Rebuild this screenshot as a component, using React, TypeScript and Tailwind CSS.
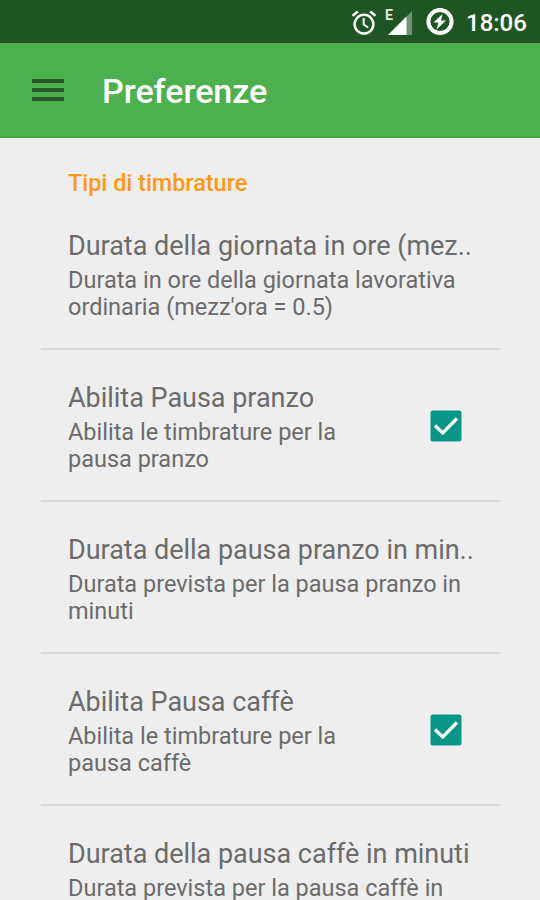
import clsx from 'clsx'

type Preference = {
  title: string
  // One entry per drawn line of the summary
  summary: string[]
  checked?: boolean
}

const preferences: Preference[] = [
  {
    title: 'Durata della giornata in ore (mez..',
    summary: ['Durata in ore della giornata lavorativa', "ordinaria (mezz'ora = 0.5)"],
  },
  {
    title: 'Abilita Pausa pranzo',
    summary: ['Abilita le timbrature per la', 'pausa pranzo'],
    checked: true,
  },
  {
    title: 'Durata della pausa pranzo in min..',
    summary: ['Durata prevista per la pausa pranzo in', 'minuti'],
  },
  {
    title: 'Abilita Pausa caffè',
    summary: ['Abilita le timbrature per la', 'pausa caffè'],
    checked: true,
  },
  {
    title: 'Durata della pausa caffè in minuti',
    summary: ['Durata prevista per la pausa caffè in'],
  },
]

function AlarmIcon() {
  return (
    <svg width="26" height="28" viewBox="0 0 26 28" fill="none" stroke="#f4f7f4">
      <circle cx="13" cy="16.2" r="9.4" strokeWidth="2.5" />
      <path d="M12.7 10v6.5l4.5 3" strokeWidth="2" />
      <path d="M1.5 7.8l5.4-4.4M24.5 7.8l-5.4-4.4" strokeWidth="2.6" />
    </svg>
  )
}

function SignalIcon() {
  return (
    <span className="relative block h-[28px] w-[28px]">
      <span className="absolute left-0 top-0 text-[14px] font-bold leading-[15px] text-[#dfe8df]">E</span>
      <svg width="28" height="28" viewBox="0 0 28 28">
        <path d="M27 3v24H3z" fill="#6f9271" />
        <path d="M21.5 8.5V27H3z" fill="#fff" />
      </svg>
    </span>
  )
}

function BatteryIcon() {
  return (
    <svg width="28" height="28" viewBox="0 0 28 28" fill="none">
      <circle cx="14" cy="13.5" r="11.6" stroke="#fff" strokeWidth="4" />
      <path d="M16.5 6l-9 8.5h4.8L10.5 21.5l9.5-9.1h-5z" fill="#fff" />
    </svg>
  )
}

function Checkbox() {
  return (
    <svg width="32" height="32" viewBox="0 0 32 32" fill="none">
      <rect x="0.5" y="0.5" width="31" height="31" rx="2.5" fill="#079688" />
      <path d="M5 15.5l7.7 7.5L27 8.5" stroke="#fff" strokeWidth="3.3" />
    </svg>
  )
}

function PreferenceRow({ item, last }: { item: Preference; last: boolean }) {
  return (
    <li
      className={clsx(
        'flex h-[152px] items-start justify-between pl-[27px] pr-[38px] pt-[32px]',
        !last && 'border-b-2 border-[#dadada]'
      )}
    >
      <div className="whitespace-nowrap text-[#6b6b6b]">
        <div className="text-[27px] leading-[32px] tracking-[-0.02px]">{item.title}</div>
        <div className="mt-[5px] text-[23.5px] leading-[27px]">
          {item.summary.map((line) => (
            <div key={line}>{line}</div>
          ))}
        </div>
      </div>
      {item.checked && (
        <div className="mt-[28px]">
          <Checkbox />
        </div>
      )}
    </li>
  )
}

export default function App() {
  return (
    <div className="flex h-[900px] w-[540px] flex-col overflow-hidden bg-[#eeeeee] font-['Roboto',sans-serif]">
      {/* Status bar */}
      <div className="flex h-[43px] shrink-0 items-center bg-[#1f5522] pl-[351px] text-white">
        <AlarmIcon />
        <div className="ml-[8px]">
          <SignalIcon />
        </div>
        <div className="ml-[13px]">
          <BatteryIcon />
        </div>
        <span className="ml-[12px] pt-[2px] text-[24px] font-medium leading-[28px]">18:06</span>
      </div>

      {/* Toolbar */}
      <header className="flex h-[95px] shrink-0 items-center border-b-2 border-[#3bab40] bg-[#4caf50] pl-[32px]">
        <div className="flex w-[32px] flex-col gap-[5px]">
          <span className="h-[4px] bg-[#255a28]" />
          <span className="h-[4px] bg-[#255a28]" />
          <span className="h-[4px] bg-[#255a28]" />
        </div>
        <h1 className="ml-[38px] pt-[3px] text-[34px] font-medium leading-[40px] text-white">Preferenze</h1>
      </header>

      {/* Preference list */}
      <main className="pl-[41px] pr-[40px]">
        <h2 className="flex h-[60px] items-end pl-[27px] text-[23.4px] font-medium leading-[30px] text-[#ff9913]">
          Tipi di timbrature
        </h2>
        <ul>
          {preferences.map((item, i) => (
            <PreferenceRow key={item.title} item={item} last={i === preferences.length - 1} />
          ))}
        </ul>
      </main>
    </div>
  )
}
